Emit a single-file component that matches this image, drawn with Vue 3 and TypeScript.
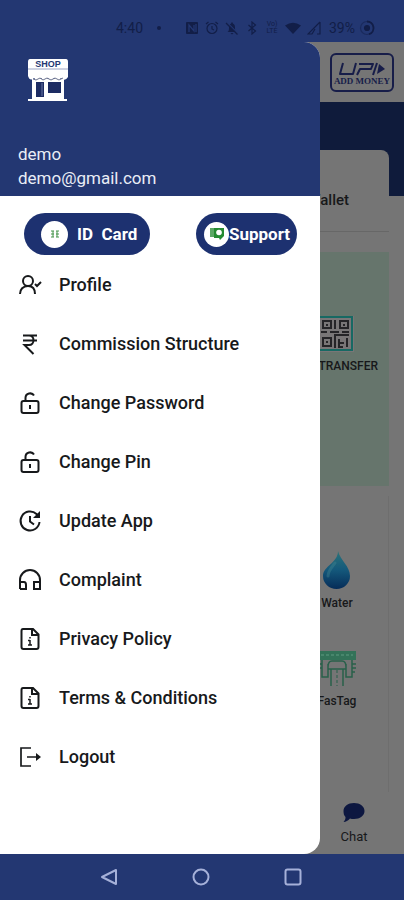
<script setup lang="ts">
interface MenuItem {
  label: string
  icon: 'profile' | 'rupee' | 'lock' | 'update' | 'headphones' | 'file' | 'logout'
}

const menu: MenuItem[] = [
  { label: 'Profile', icon: 'profile' },
  { label: 'Commission Structure', icon: 'rupee' },
  { label: 'Change Password', icon: 'lock' },
  { label: 'Change Pin', icon: 'lock' },
  { label: 'Update App', icon: 'update' },
  { label: 'Complaint', icon: 'headphones' },
  { label: 'Privacy Policy', icon: 'file' },
  { label: 'Terms & Conditions', icon: 'file' },
  { label: 'Logout', icon: 'logout' },
]
</script>

<template>
  <div class="screen">
    <header class="status">
      <span class="time">4:40</span>
      <span class="dot"></span>
      <div class="status-icons">
        <svg viewBox="0 0 14 14" width="14" height="14"><rect x="1" y="1" width="12" height="12" rx="1" fill="currentColor" /><path d="M4 11V4l5 6V4M11 3v8" fill="none" stroke="#233772" stroke-width="1.3" /></svg>
        <svg viewBox="0 0 14 14" width="14" height="14" class="line"><circle cx="7" cy="7.500" r="5" /><path d="M7 5v3l2 1M1 3l2.500-2M13 3l-2.500-2" /></svg>
        <svg viewBox="0 0 14 14" width="14" height="14"><path d="M2.500 11c1.500-1 1.500-2 1.500-4.500C4 4 5 3 6.200 2.600V1.500h1.600v1.100C9 3 10 4 10 6.500c0 2.500 0 3.500 1.500 4.500zM5.500 12h3L7 13.500z" fill="currentColor" /><path d="M1.500 1l12 12" stroke="#233772" stroke-width="1.200" /><path d="M1 2l11.500 11.500" stroke="currentColor" stroke-width="1.200" /></svg>
        <svg viewBox="0 0 14 14" width="14" height="14" class="line"><path d="M3.500 4l7 6L7 13V1l3.500 3-7 6" /></svg>
        <span class="volte"><span>Vo)</span><span>LTE</span></span>
        <svg viewBox="0 0 16 14" width="16" height="14"><path d="M0 4.500Q8-1 16 4.500L8 13z" fill="currentColor" /></svg>
        <svg viewBox="0 0 14 14" width="14" height="14" class="line"><path d="M13 1v12h-3M13 1L1 13h4l3-5" /></svg>
      </div>
      <span class="battery">39%</span>
      <svg class="line ring" viewBox="0 0 16 16" width="16" height="16"><circle cx="8" cy="8" r="6.500" opacity=".5" /><path d="M8 1.500a6.500 6.500 0 0 1 2 12.700" stroke-width="1.800" /><circle cx="8" cy="8" r="2.500" fill="currentColor" /></svg>
    </header>

    <div class="stage">
      <main class="page">
        <div class="topbar">
          <button class="upi" type="button">
            <svg viewBox="0 0 48 14" width="48" height="14" aria-hidden="true">
              <g fill="none" stroke="#171d49" stroke-width="2" stroke-linejoin="round">
                <path d="M5 1L2 12h13l3-11" />
                <path d="M19 13l3-6h11l2-5H21" />
                <path d="M39 1l-4 12" />
              </g>
              <path d="M41 2l6 5-8 5z" fill="#171d49" />
            </svg>
            <span>ADD MONEY</span>
          </button>
        </div>
        <div class="band">
          <section class="wallet"><span>Wallet</span></section>
        </div>
        <section class="transfer">
          <div class="transfer-tile">
            <svg viewBox="0 0 36 36" width="36" height="36">
              <rect width="36" height="36" fill="#797677" />
              <rect x="1" y="1" width="33" height="33" fill="none" stroke="#176963" stroke-width="2" />
              <g fill="none" stroke="#252427" stroke-width="2">
                <rect x="5" y="5" width="8" height="7" /><rect x="22" y="5" width="8" height="7" /><rect x="5" y="22" width="8" height="8" />
                <path d="M17 4v9M3 16h6M12 16h9M24 16h7M17 32V19h14M21 23v8h4M29 22v9M22 27h4" />
              </g>
              <path d="M8 8h2v2H8zM25 8h2v2h-2zM8 25h2v2H8z" fill="#252427" />
            </svg>
            <span>TRANSFER</span>
          </div>
        </section>
        <section class="services">
          <div class="service">
            <svg viewBox="0 0 28 40" width="28" height="40">
              <defs>
                <linearGradient id="drop" x1="0" y1="0" x2="0" y2="1"><stop offset="0" stop-color="#2b747a" /><stop offset=".5" stop-color="#14587b" /><stop offset="1" stop-color="#062c58" /></linearGradient>
              </defs>
              <path d="M15 1c2 9 12 15 12 25a13.500 13 0 0 1-27 0C0 16 15 13 15 1z" fill="url(#drop)" />
              <path d="M12 13c-4 5-7 8-7 13" fill="none" stroke="#4a8d94" stroke-width="3" stroke-linecap="round" opacity=".35" />
            </svg>
            <span>Water</span>
          </div>
          <div class="service">
            <svg viewBox="0 0 38 38" width="38" height="38">
              <path d="M0 1h38v9H0z" fill="#327258" />
              <path d="M3 5h32" stroke="#48866c" stroke-width="2" stroke-dasharray="3 2" />
              <g fill="none" stroke="#28604a" stroke-width="1.500">
                <path d="M4 10v17h6V14M34 10v17h-6V14M10 17q0-6 4-6h10q4 0 4 6v2H10zM13 19v17M25 19v17M1 14h3M1 18h3M34 14h4M34 18h4M34 22h3" />
                <path d="M19 20v16" stroke-dasharray="3 2" stroke-width="1" />
              </g>
            </svg>
            <span>FasTag</span>
          </div>
        </section>
        <footer class="tabs">
          <a class="chat" href="#chat">
            <svg viewBox="0 0 22 20" width="22" height="20"><path d="M11 0c6 0 10.500 3.500 10.500 8S17 16 11 16c-1.500 0-3-.2-4-.6C5 17.500 3 19 .5 19c1.500-1.500 2-3 2-5C1 12.500.5 10.500.5 8 .5 3.500 5 0 11 0z" fill="#0d1740" /></svg>
            <span>Chat</span>
          </a>
        </footer>
      </main>

      <aside class="drawer">
        <div class="account">
          <svg class="shop" viewBox="0 0 42 44" width="42" height="44" aria-hidden="true">
            <path d="M3 1h36q2 0 2 3v15q-3 5-7 1-3 4-7 0-3 4-6 0-3 4-7 0-3 4-7 0-4 4-6-2V4q0-3 2-3z" fill="#fff" />
            <path d="M1 11h40" stroke="#9ca5c4" />
            <path d="M5 21h32v20h3v2H1v-2h4z" fill="#fff" />
            <path d="M6 21l3 1 4-2 3 2 4-2 4 2 4-2 4 2 4-2" fill="none" stroke="#6d7490" />
            <path d="M9 24h8v15H9zM21 24h13v11H21z" fill="#1d2c63" />
            <path d="M15 25v13" stroke="#6877a5" />
            <text x="21" y="9" text-anchor="middle">SHOP</text>
          </svg>
          <p>demo</p>
          <p>demo@gmail.com</p>
        </div>

        <div class="actions">
          <button class="pill id-card" type="button">
            <span class="badge wide"><svg viewBox="0 0 8 8" width="8" height="8"><path d="M0 1h3M0 4h3M0 7h3M5 1h3M5 4h3M5 7h3M2 1v6M6 1v6" fill="none" stroke="#45944a" /></svg></span>
            <span>ID&nbsp; Card</span>
          </button>
          <button class="pill support" type="button">
            <span class="badge"><svg viewBox="0 0 16 14" width="16" height="14"><path d="M2 1v9M4 1v9" stroke="#258b32" stroke-width="1.500" /><path d="M5 1h10v8l-4 4-1-2H5z" fill="#258b32" /><circle cx="10" cy="5.500" r="2.800" fill="#fff" /></svg></span>
            <span>Support</span>
          </button>
        </div>

        <nav class="menu">
          <a v-for="item in menu" :key="item.label" href="#">
            <svg viewBox="0 0 24 24" width="24" height="24" aria-hidden="true">
              <template v-if="item.icon === 'profile'"><circle cx="10" cy="8" r="5" /><path d="M2 21c0-4.500 3-8 8-8s7 3.500 7 8M17 11l2 2 4-4" /></template>
              <path v-else-if="item.icon === 'rupee'" d="M5 3.500h14M5 8.500h14M6 3.500h5c6 0 6 9.500 0 9.500H6.500l9 9" />
              <template v-else-if="item.icon === 'lock'"><rect x="3.500" y="10" width="17" height="12" rx="2" /><path d="M7.500 10V7c0-5 6.500-6 8.500-2.500M12 14v4" /><circle cx="12" cy="15" r="1" fill="#17191b" stroke="none" /></template>
              <template v-else-if="item.icon === 'update'"><path d="M21.500 13a9.500 9.500 0 1 1-3-8L21 8M12 7v5.500l4 3" /><path d="M22 2v7h-7z" fill="#17191b" stroke="none" /></template>
              <path v-else-if="item.icon === 'headphones'" d="M2 21v-9a10 10 0 0 1 20 0v9h-6v-7h6M2 14h4q2 0 2 3v4H2" />
              <template v-else-if="item.icon === 'file'"><path d="M5 2h10l5.500 5.500V20q0 2-2 2H5.500q-2 0-2-2V4q0-2 1.500-2zM14 2v6h6" /><path d="M12 13v5M10 18h4M10 13.500h2M12 10v1.500" stroke-width="1.500" /></template>
              <template v-else><path d="M13 3H3v18h10M9 12h11" stroke-width="1.700" /><path d="M18 8l5 4-5 4z" fill="#17191b" stroke="none" /></template>
            </svg>
            <span>{{ item.label }}</span>
          </a>
        </nav>
      </aside>
    </div>

    <footer class="system">
      <button type="button" aria-label="Back"><svg viewBox="0 0 18 18" width="18" height="18"><path d="M16 2v14L2 9z" /></svg></button>
      <button type="button" aria-label="Home"><svg viewBox="0 0 18 18" width="18" height="18"><circle cx="9" cy="9" r="7.500" /></svg></button>
      <button type="button" aria-label="Recent apps"><svg viewBox="0 0 18 18" width="18" height="18"><rect x="1.500" y="1.500" width="15" height="15" rx="2" /></svg></button>
    </footer>
  </div>
</template>

<style>
body {
  margin: 0;
}
</style>

<style scoped>
* {
  box-sizing: border-box;
}
.screen {
  min-height: 100vh;
  display: flex;
  flex-direction: column;
  background: #233772;
  font-family: Roboto, "Liberation Sans", sans-serif;
}
button {
  border: 0;
  padding: 0;
  background: none;
  font: inherit;
}
a {
  color: inherit;
  text-decoration: none;
}
.status {
  height: 42px;
  padding: 14px 29px 0 0;
  display: flex;
  align-items: center;
  justify-content: flex-end;
  color: #121e48;
  font-size: 14px;
}
.dot {
  width: 4px;
  height: 4px;
  margin: 0 24px 0 14px;
  border-radius: 50%;
  background: currentColor;
}
.status-icons {
  display: flex;
  align-items: center;
  gap: 6px;
}
.line {
  fill: none;
  stroke: currentColor;
  stroke-width: 1.2;
}
.volte {
  width: 14px;
  display: flex;
  flex-direction: column;
  align-items: center;
  font-size: 7px;
  line-height: 7px;
}
.battery {
  margin-left: 8px;
}
.ring {
  margin-left: 4px;
}
.stage {
  position: relative;
  flex: 1;
  display: flex;
  background: #757575;
}
.page {
  flex: 1;
  display: flex;
  flex-direction: column;
  color: #17181a;
}
.topbar {
  height: 60px;
  padding: 0 10px;
  display: flex;
  align-items: center;
  justify-content: flex-end;
}
.upi {
  width: 64px;
  height: 39px;
  padding-top: 5px;
  border: 2px solid #171d49;
  border-radius: 6px;
  display: flex;
  flex-direction: column;
  align-items: center;
  justify-content: center;
  color: #171d49;
  font: bold 9px/11px "Liberation Serif", serif;
  white-space: nowrap;
}
.band {
  height: 94px;
  padding: 48px 15px 0;
  background: #0f1b3b;
}
.wallet {
  height: 82px;
  padding: 18px 40px 0;
  border-radius: 0 8px 0 0;
  border-bottom: 1px solid #676767;
  display: flex;
  align-items: center;
  justify-content: flex-end;
  background: #757575;
  font-size: 15px;
  font-weight: 500;
}
.transfer {
  margin-top: 56px;
  height: 234px;
  margin-right: 15px;
  padding: 64px 11px 0;
  display: flex;
  justify-content: flex-end;
  align-items: flex-start;
  background: #66756c;
}
.transfer-tile {
  display: flex;
  flex-direction: column;
  gap: 6px;
  font-size: 12px;
  font-weight: 500;
  line-height: 16px;
}
.services {
  flex: 1;
  margin: 10px 15px 0 0;
  padding: 54px 27px 0;
  border-right: 1px solid #6e6e6e;
  display: flex;
  flex-direction: column;
  align-items: flex-end;
  gap: 40px;
}
.service {
  width: 48px;
  display: flex;
  flex-direction: column;
  align-items: center;
  gap: 6px;
  font-size: 12px;
  font-weight: 500;
  line-height: 14px;
}
.tabs {
  height: 62px;
  display: flex;
  justify-content: flex-end;
  padding: 11px 33px 0;
}
.chat {
  width: 34px;
  display: flex;
  flex-direction: column;
  align-items: center;
  gap: 6px;
  font-size: 13px;
  line-height: 16px;
}
.drawer {
  position: absolute;
  inset: 0 84px 0 0;
  overflow: hidden;
  border-radius: 0 16px 16px 0;
  background: #fff;
}
.account {
  height: 154px;
  padding: 16px 18px 0;
  background: #233772;
  color: #e9edf6;
  font-size: 17px;
}
.shop {
  display: block;
  margin: 0 0 40px 9px;
}
.shop text {
  fill: #233772;
  font: bold 9px "Liberation Sans", sans-serif;
}
.account p {
  margin: 0;
  line-height: 24px;
}
.actions {
  display: flex;
  justify-content: space-between;
  padding: 17px 23px 0 24px;
}
.pill {
  height: 42px;
  border-radius: 21px;
  display: flex;
  align-items: center;
  background: #1d3170;
  color: #fff;
  font-size: 17px;
  font-weight: 700;
  white-space: nowrap;
}
.id-card {
  width: 126px;
  padding-left: 17px;
  gap: 9px;
}
.support {
  width: 101px;
  padding-left: 8px;
}
.badge {
  flex: none;
  width: 25px;
  height: 25px;
  border-radius: 50%;
  display: flex;
  align-items: center;
  justify-content: center;
  background: #fff;
}
.wide {
  width: 27px;
  height: 27px;
}
.menu {
  display: flex;
  flex-direction: column;
}
.menu a {
  height: 59px;
  padding-left: 18px;
  display: flex;
  align-items: center;
  gap: 17px;
  color: #17191b;
  font-size: 18px;
  font-weight: 500;
}
.menu svg {
  fill: none;
  stroke: #17191b;
  stroke-width: 2;
}
.system {
  height: 46px;
  display: flex;
  align-items: center;
  justify-content: center;
  gap: 74px;
  padding-right: 2px;
}
.system button {
  display: flex;
}
.system svg {
  fill: none;
  stroke: #a6b1d9;
  stroke-width: 2;
  stroke-linejoin: round;
}
</style>
